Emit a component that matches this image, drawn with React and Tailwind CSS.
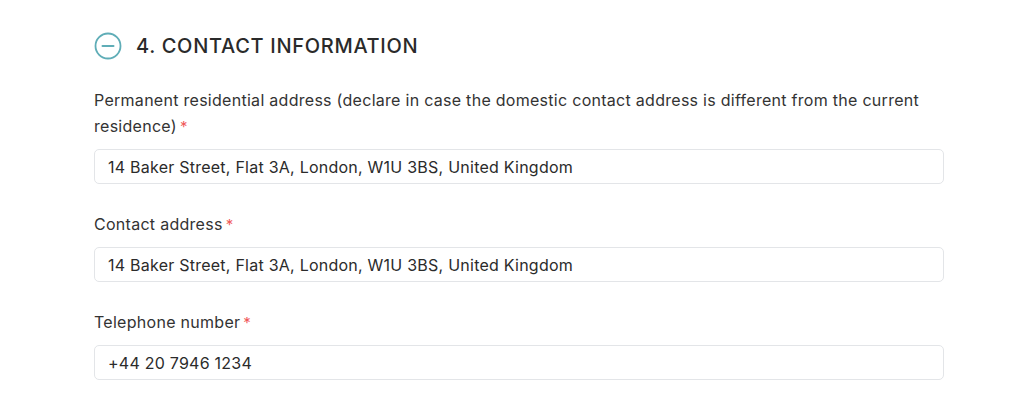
export default function App() {
  const font = { fontFamily: 'Inter, "Noto Sans", sans-serif' };
  const Field = ({ label, value }) => (
    <div className="flex flex-col">
      <div className="text-[16px] leading-[26px] text-[#333333] tracking-[0.28px]">
        {label}
        <span className="ml-[3px] text-[15px] text-[#f05a5a]">*</span>
      </div>
      <div className="mt-[9px] h-[35px] flex items-center rounded-[5px] border border-[#e3e5e8] bg-white px-[13px] text-[16px] text-[#2b2b2b] tracking-[0.24px]">
        {value}
      </div>
    </div>
  );
  return (
    <div className="w-[1024px] h-[419px] bg-white overflow-hidden" style={font}>
      <div className="pl-[94px] pr-[80px] pt-[31px]">
        <div className="flex items-center gap-[14px] h-[30px]">
          <svg width="28" height="28" viewBox="0 0 28 28" fill="none">
            <circle cx="14" cy="14" r="12.5" stroke="#5fadb7" strokeWidth="1.8" />
            <line x1="8.5" y1="14" x2="19.5" y2="14" stroke="#5fadb7" strokeWidth="2" strokeLinecap="round" />
          </svg>
          <h2 className="text-[20px] font-medium text-[#2a2a2a] tracking-[0.7px]">4. CONTACT INFORMATION</h2>
        </div>
        <div className="mt-[26px] flex flex-col gap-[27px] w-[850px]">
          <Field
            label="Permanent residential address (declare in case the domestic contact address is different from the current residence)"
            value="14 Baker Street, Flat 3A, London, W1U 3BS, United Kingdom"
          />
          <Field label="Contact address" value="14 Baker Street, Flat 3A, London, W1U 3BS, United Kingdom" />
          <Field label="Telephone number" value="+44 20 7946 1234" />
        </div>
      </div>
    </div>
  );
}
